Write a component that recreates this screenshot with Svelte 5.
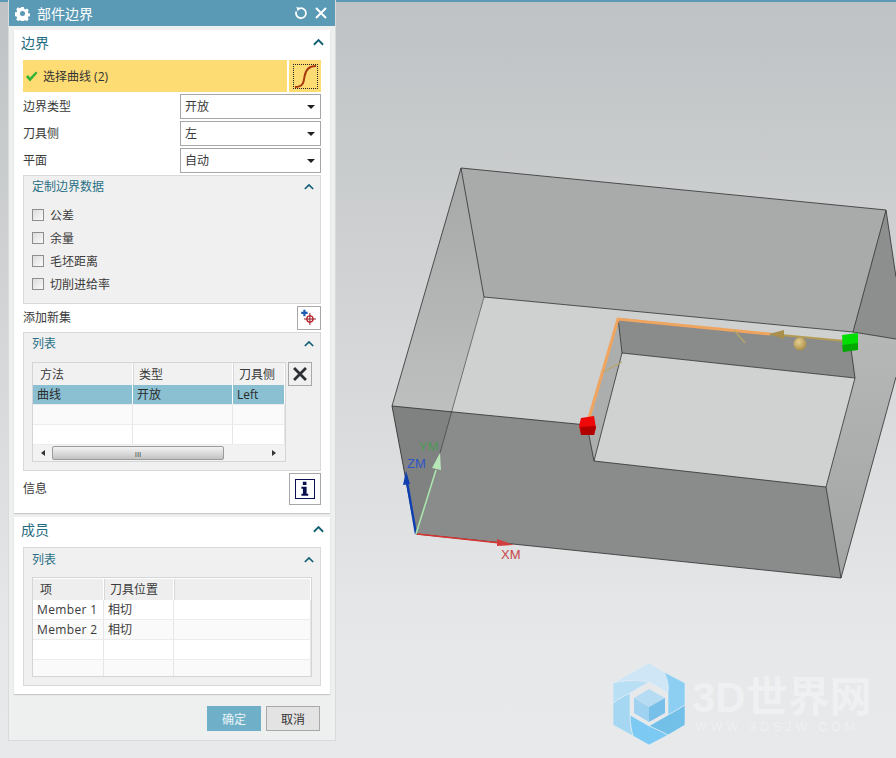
<script>
  const dropdowns = [
    { label: "边界类型", value: "开放" },
    { label: "刀具侧", value: "左" },
    { label: "平面", value: "自动" },
  ];
  const checks = ["公差", "余量", "毛坯距离", "切削进给率"];
  const members = [
    ["Member 1", "相切", ""],
    ["Member 2", "相切", ""],
    ["", "", ""],
    ["", "", ""],
  ];
</script>

{#snippet chevron(cls)}
  <svg class={cls} viewBox="0 0 12 8" aria-hidden="true">
    <path d="M1 7 L6 2 L11 7" fill="none" stroke="currentColor" stroke-width="2" />
  </svg>
{/snippet}

<div class="screen">
  <svg class="viewport" viewBox="0 0 896 758" aria-hidden="true">
    <defs>
      <linearGradient id="side" x1="0" y1="0" x2="0" y2="1">
        <stop offset="0" stop-color="#a6a8a8" />
        <stop offset="1" stop-color="#bec0c0" />
      </linearGradient>
      <linearGradient id="rightface" x1="0" y1="0" x2="0" y2="1">
        <stop offset="0" stop-color="#b6b8b8" />
        <stop offset="1" stop-color="#a2a4a4" />
      </linearGradient>
      <radialGradient id="ball" cx="0.4" cy="0.35" r="0.7">
        <stop offset="0" stop-color="#e6cf90" />
        <stop offset="1" stop-color="#a58a45" />
      </radialGradient>
    </defs>

    <!-- box faces -->
    <polygon points="461,168 886,210 853,332 484,297" fill="#a9abab" />
    <polygon points="886,210 896,277 896,339 853,332" fill="#8d8e8e" />
    <polygon points="461,168 484,297 452,412 392,406" fill="url(#side)" />
    <polygon points="484,297 853,332 850,342 618,318 587,425 452,412" fill="#cfd1d1" />
    <polygon points="853,332 896,339 896,377 841,578 826,487 855,378 850,342" fill="url(#rightface)" />
    <polygon points="618,318 850,342 855,378 622,353" fill="#8a8b8b" />
    <polygon points="618,318 622,353 594,461 587,425" fill="#acaeae" />
    <polygon points="622,353 855,378 826,487 594,461" fill="#d0d2d2" />
    <polygon points="392,406 587,425 594,461 826,487 841,578 416,534" fill="#8a8b8b" />
    <polygon points="392,406 452,412 416,534" fill="#808282" />

    <g fill="none" stroke="#2c2f2f" stroke-width="0.8">
      <path d="M461 168 L886 210 L853 332 L484 297 Z" />
      <path d="M886 210 L896 277" />
      <path d="M853 332 L896 339" />
      <path d="M461 168 L392 406 L416 534 L841 578 L896 377" />
      <path d="M484 297 L440 453" stroke-opacity="0.7" />
      <path d="M392 406 L587 425 L594 461 L826 487 L841 578" />
      <path d="M622 353 L855 378 L850 342 M855 378 L826 487 M622 353 L594 461 M618 318 L622 353" />
    </g>

    <!-- boundary curve -->
    <path d="M587 425 L618 319 L770 334" fill="none" stroke="#efa55f" stroke-width="3" />
    <path d="M770 334 L845 341" fill="none" stroke="#b59c55" stroke-width="2" />
    <path d="M769 334 L784 330 L784 339 Z" fill="#a8904c" />
    <path d="M734 330 L745 343 M603 372 L622 362" fill="none" stroke="#b9a766" stroke-width="1.2" />
    <circle cx="800" cy="344" r="6.5" fill="url(#ball)" />

    <polygon points="842,335 858,333 858,347 843,352" fill="#00dd00" />
    <polygon points="842,345 858,343 858,350 843,352" fill="#00a800" />
    <polygon points="581,418 594,416 596,428 594,435 581,434 579,426" fill="#ee0808" />
    <polygon points="580,427 596,426 594,435 581,435" fill="#b00000" />

    <!-- axes -->
    <path d="M416 534 L407 482" stroke="#0f3fb0" stroke-width="2.4" fill="none" />
    <path d="M406 471 L410 484 L403 485 Z" fill="#0f3fb0" />
    <path d="M416 534 L436 470" stroke="#a9e6ac" stroke-width="1.6" fill="none" />
    <path d="M440 453 L441 470 L432 468 Z" fill="#b7e6b7" />
    <path d="M417 534 L500 543" stroke="#d8342f" stroke-width="1.6" fill="none" />
    <path d="M514 545 L497 539 L497 546 Z" fill="#d23c3c" />
    <text class="axis" x="407" y="468" fill="#2f55c8">ZM</text>
    <text class="axis" x="419" y="451" fill="#4d9a55">YM</text>
    <text class="axis" x="501" y="559" fill="#c9464a">XM</text>

    <!-- watermark: six blades round a ring and a cube -->
    <g stroke="#e5eef4" stroke-width="0.6">
      <path d="M613 683 L649 663 L664 672 C668 680 669 686 668 693 L649 682 C638 680 625 680 613 683 Z" fill="#cfe6f6" />
      <path d="M664 672 L685 683 L685 705 C680 708 674 712 668 715 L668 693 C669 686 668 680 664 672 Z" fill="#8dcff2" />
      <path d="M685 705 L685 725 L668 735 C662 732 656 729 649 726 L668 715 C674 712 680 708 685 705 Z" fill="#72bfe8" />
      <path d="M649 745 L668 735 C662 732 656 729 649 726 L630 715 C630 722 631 730 633 736 Z" fill="#7ccaf3" />
      <path d="M613 725 L633 736 C631 730 630 722 630 715 L630 693 C624 696 618 699 613 703 Z" fill="#a6d7f2" />
      <path d="M613 683 L613 703 C618 699 624 696 630 693 L649 682 C638 680 625 680 613 683 Z" fill="#b9dff5" />
    </g>
    <polygon points="634,698 649,689 665,698 649,707" fill="#b5dcf3" />
    <polygon points="634,698 649,707 649,722 634,713" fill="#9fd2f1" />
    <polygon points="649,707 665,698 665,713 649,722" fill="#78c0e9" />
    <text class="wm-big" x="692" y="712">3D世界网</text>
    <text class="wm-small" x="695" y="731">WWW.3DSJW.COM</text>
  </svg>

  <div class="topline"></div>

  <div class="panel">
    <div class="titlebar">
      <svg class="gear" viewBox="0 0 16 16" aria-hidden="true">
        <path fill-rule="evenodd" fill="#fff" d="M6.6 1h2.8l.4 2 1.2.6 1.8-1 1.9 2-1 1.8.5 1.2 2 .4v2.8l-2 .4-.5 1.2 1 1.8-1.9 1.9-1.8-1-1.2.5-.4 2H6.6l-.4-2-1.2-.5-1.8 1-1.9-1.9 1-1.8-.5-1.2-2-.4V6.8l2-.4.5-1.2-1-1.8 1.9-2 1.8 1 1.2-.6zM8 5.4a2.7 2.7 0 1 0 0 5.4 2.7 2.7 0 0 0 0-5.4z" />
      </svg>
      <span class="title">部件边界</span>
      <svg class="reset" viewBox="0 0 14 14" aria-hidden="true">
        <path d="M5 2.6 A5 5 0 1 1 2.3 5.4" fill="none" stroke="#fff" stroke-width="1.7" />
        <path d="M2.4 0.8 L6.4 2.2 L3.6 5.2 Z" fill="#fff" />
      </svg>
      <svg class="close" viewBox="0 0 12 12" aria-hidden="true">
        <path d="M1 1 L11 11 M11 1 L1 11" stroke="#fff" stroke-width="2" />
      </svg>
    </div>

    <section class="block first">
      <div class="block-head">
        <span>边界</span>
        {@render chevron("chev")}
      </div>

      <div class="select-row">
        <div class="select-main">
          <svg class="tick" viewBox="0 0 13 11" aria-hidden="true">
            <path d="M1 6 L3 4 L5 6.5 L11 0.5 L12.5 2 L5 10.5 Z" fill="#33b233" />
          </svg>
          <span>选择曲线 (2)</span>
        </div>
        <div class="select-btn">
          <div class="dots">
            <svg viewBox="0 0 24 24" aria-hidden="true">
              <path d="M1 23 C9 23 10 19 11 12 C12 5 15 1 23 1" fill="none" stroke="#a83a10" stroke-width="2" />
            </svg>
          </div>
        </div>
      </div>

      {#each dropdowns as d}
        <div class="field">
          <span class="field-label">{d.label}</span>
          <div class="dropdown">
            <span>{d.value}</span>
            <i class="caret"></i>
          </div>
        </div>
      {/each}

      <div class="group custom">
        <div class="group-head">
          <span>定制边界数据</span>
          {@render chevron("chev small")}
        </div>
        <div class="checks">
          {#each checks as c}
            <label class="check"><i class="box"></i>{c}</label>
          {/each}
        </div>
      </div>

      <div class="action-row add">
        <span>添加新集</span>
        <div class="icon-btn small">
          <svg viewBox="0 0 24 24" aria-hidden="true">
            <path d="M7 3 V10 M3.5 6.5 H10.5" stroke="#1d5bb5" stroke-width="2.4" />
            <circle cx="13" cy="13" r="3.4" fill="none" stroke="#c8202a" stroke-width="1.4" />
            <path d="M13 6.5 V19.5 M6.5 13 H19.5" stroke="#8c1c28" stroke-width="1.1" />
          </svg>
        </div>
      </div>

      <div class="group list">
        <div class="group-head">
          <span>列表</span>
          {@render chevron("chev small")}
        </div>
        <div class="list-body">
          <div class="table t1">
            <div class="tr head">
              <div class="td">方法</div>
              <div class="td">类型</div>
              <div class="td">刀具侧</div>
            </div>
            <div class="tr selected">
              <div class="td">曲线</div>
              <div class="td">开放</div>
              <div class="td">Left</div>
            </div>
            <div class="tr alt"><div class="td"></div><div class="td"></div><div class="td"></div></div>
            <div class="tr"><div class="td"></div><div class="td"></div><div class="td"></div></div>
            <div class="scrollbar">
              <i class="arrow left"></i>
              <div class="thumb"><span>III</span></div>
              <i class="arrow right"></i>
            </div>
          </div>
          <div class="icon-btn small del">
            <svg viewBox="0 0 24 24" aria-hidden="true">
              <path d="M5.5 5.5 L18.5 18.5 M18.5 5.5 L5.5 18.5" stroke="#2b2f33" stroke-width="3" />
            </svg>
          </div>
        </div>
      </div>

      <div class="action-row info">
        <span>信息</span>
        <div class="icon-btn big">
          <div class="info-mark">
            <svg viewBox="0 0 20 20" aria-hidden="true">
              <path d="M7.6 2 H11.6 V5.6 H7.6 Z M6 7.5 H11.8 V15.4 H13.6 V17.6 H6 V15.4 H7.7 V9.7 H6 Z" fill="#0b1150" />
            </svg>
          </div>
        </div>
      </div>
    </section>

    <section class="block second">
      <div class="block-head">
        <span>成员</span>
        {@render chevron("chev")}
      </div>
      <div class="group members">
        <div class="group-head">
          <span>列表</span>
          {@render chevron("chev small")}
        </div>
        <div class="table t2">
          <div class="tr head">
            <div class="td">项</div>
            <div class="td">刀具位置</div>
            <div class="td"></div>
          </div>
          {#each members as m, i}
            <div class="tr" class:alt={i % 2 === 1}>
              <div class="td">{m[0]}</div>
              <div class="td">{m[1]}</div>
              <div class="td">{m[2]}</div>
            </div>
          {/each}
        </div>
      </div>
    </section>

    <div class="footer">
      <button class="primary">确定</button>
      <button class="cancel">取消</button>
    </div>
  </div>
</div>

<style>
  :global(body) {
    margin: 0;
  }

  .screen {
    position: relative;
    width: 896px;
    height: 758px;
    overflow: hidden;
    box-sizing: border-box;
    padding-left: 8px;
    background: linear-gradient(#bfc2c4 0, #d4d6d7 45%, #e7e8e9 85%, #e8e9ea 100%);
    font-family: "Open Sans", "Noto Sans CJK SC", sans-serif;
    font-size: 12px;
    color: #3a3a3a;
  }

  .viewport {
    position: absolute;
    left: 0;
    top: 0;
    width: 896px;
    height: 758px;
  }

  .topline {
    position: absolute;
    left: 0;
    top: 0;
    width: 100%;
    height: 2px;
    background: #5a9ab5;
  }

  .axis {
    font-family: "Liberation Sans", sans-serif;
    font-size: 13px;
  }

  .wm-big {
    font-family: "Liberation Sans", "Noto Sans CJK SC", sans-serif;
    font-weight: 700;
    font-size: 42px;
    fill: #eff0f1;
  }

  .wm-small {
    font-family: "Liberation Sans", sans-serif;
    font-size: 12.5px;
    letter-spacing: 4px;
    fill: #eff0f1;
  }

  .panel {
    position: relative;
    width: 328px;
    height: 741px;
    box-sizing: border-box;
    background: #eeefef;
    border: 1px solid #d9dadb;
    border-top: 0;
    display: flex;
    flex-direction: column;
  }

  .titlebar {
    height: 26px;
    flex: none;
    background: #5a9ab5;
    color: #fff;
    display: flex;
    align-items: center;
    padding: 0 8px 0 6px;
    font-size: 14px;
  }

  .gear {
    width: 15px;
    height: 15px;
  }

  .title {
    margin-left: 7px;
    flex: 1;
  }

  .reset {
    width: 14px;
    height: 14px;
    margin-right: 7px;
  }

  .close {
    width: 12px;
    height: 12px;
  }

  .block {
    margin: 4px 5px 0;
    background: #fff;
    padding: 0 9px;
    box-shadow: 0 1px 1px #c8c9ca;
  }

  .first {
    height: 483px;
  }

  .second {
    height: 177px;
  }

  .block-head {
    height: 24px;
    padding-bottom: 6px;
    display: flex;
    align-items: center;
    justify-content: space-between;
    margin-left: -2px;
    margin-right: -3px;
    font-size: 14px;
    color: #1f6c80;
  }

  .chev {
    width: 11px;
    height: 8px;
    color: #0f5e74;
  }

  .chev.small {
    width: 10px;
    height: 7px;
  }

  .select-row {
    display: flex;
    height: 32px;
    gap: 2px;
  }

  .select-main {
    width: 264px;
    background: #fedc74;
    display: flex;
    align-items: center;
    padding-left: 2px;
    box-sizing: border-box;
    color: #333;
  }

  .tick {
    width: 13px;
    height: 11px;
    margin-right: 5px;
  }

  .select-btn {
    width: 32px;
    background: #fedc74;
    display: flex;
    align-items: center;
    justify-content: center;
  }

  .dots {
    width: 25px;
    height: 25px;
    box-sizing: border-box;
    border: 1px dotted #222;
  }

  .dots svg {
    display: block;
    width: 23px;
    height: 23px;
  }

  .field {
    display: flex;
    justify-content: space-between;
    align-items: center;
    height: 25px;
    margin-top: 2px;
  }

  .field-label {
    margin-bottom: 2px;
  }

  .dropdown {
    width: 141px;
    height: 25px;
    box-sizing: border-box;
    border: 1px solid #a6a6a6;
    background: #fff;
    display: flex;
    align-items: center;
    justify-content: space-between;
    padding: 0 5px 2px 4px;
  }

  .caret {
    width: 0;
    height: 0;
    margin-top: 2px;
    border-left: 4px solid transparent;
    border-right: 4px solid transparent;
    border-top: 4px solid #222;
  }

  .group {
    box-sizing: border-box;
    background: #f0f0f0;
    border: 1px solid #d8d9da;
    margin-top: 2px;
  }

  .group-head {
    height: 22px;
    display: flex;
    align-items: center;
    justify-content: space-between;
    padding: 0 6px 0 8px;
    color: #2a7186;
  }

  .custom .group-head,
  .list .group-head {
    height: 20px;
    margin-bottom: 2px;
  }

  .custom {
    height: 129px;
  }

  .checks {
    margin-top: 7px;
  }

  .check {
    display: flex;
    align-items: center;
    height: 23px;
    padding-left: 8px;
  }

  .box {
    width: 12px;
    height: 12px;
    box-sizing: border-box;
    border: 1px solid #8e8e8e;
    background: linear-gradient(135deg, #dcdcdc, #fafafa);
    margin-right: 6px;
  }

  .action-row {
    display: flex;
    align-items: center;
    justify-content: space-between;
    margin-top: 2px;
  }

  .action-row > span {
    margin-bottom: 2px;
  }

  .add {
    height: 24px;
  }

  .info {
    height: 32px;
  }

  .icon-btn {
    box-sizing: border-box;
    border: 1px solid #a8a8a8;
    background: #fff;
    display: flex;
    align-items: center;
    justify-content: center;
  }

  .icon-btn.small {
    width: 24px;
    height: 24px;
  }

  .icon-btn.small svg {
    width: 22px;
    height: 22px;
  }

  .icon-btn.big {
    width: 32px;
    height: 32px;
  }

  .del {
    background: #f0f0f0;
  }

  .info-mark {
    width: 20px;
    height: 20px;
    box-sizing: border-box;
    border: 1px solid #0b1150;
    background: #fff;
  }

  .info-mark svg {
    display: block;
    width: 18px;
    height: 18px;
  }

  .list {
    height: 139px;
  }

  .list-body {
    display: flex;
    align-items: flex-start;
    gap: 2px;
    padding: 7px 0 0 8px;
  }

  .table {
    box-sizing: border-box;
    border: 1px solid #d4d5d6;
    background: #fff;
    color: #3a3a3a;
  }

  .t1 {
    width: 254px;
    height: 100px;
  }

  .t2 {
    width: 280px;
    height: 100px;
    margin: 7px 0 0 8px;
    padding-top: 1px;
    overflow: hidden;
  }

  .tr {
    display: grid;
    border-bottom: 1px solid #ececec;
    background: #fff;
  }

  .t1 .tr {
    grid-template-columns: 100px 100px 52px;
    height: 19px;
  }

  .t2 .tr {
    grid-template-columns: 71px 70px 137px;
    height: 19px;
  }

  .td {
    border-right: 1px solid #e6e6e6;
    padding-left: 4px;
    line-height: 19px;
    white-space: nowrap;
    overflow: hidden;
  }

  .t2 .td:first-child {
    letter-spacing: 0.35px;
  }

  .t1 .tr.head {
    height: 22px;
  }

  .t2 .tr.head {
    height: 21px;
    background: #eeeeee;
  }

  .tr.head {
    background: #f1f1f1;
    border-bottom: 0;
  }

  .tr.head .td {
    padding-left: 6px;
    line-height: 21px;
    border-right: 1px solid #fff;
    box-shadow: 1px 0 0 #d8d8d8 inset;
  }

  .tr.head .td:first-child {
    box-shadow: none;
    padding-left: 7px;
  }

  .t1 .tr.head .td {
    line-height: 24px;
  }

  .tr.selected {
    background: #8ac0d2;
    color: #2a2a2a;
  }

  .tr.selected .td {
    border-right: 1px solid #fff;
  }

  .tr.alt {
    background: #fafafa;
  }

  .scrollbar {
    height: 16px;
    background: #f2f2f2;
    display: flex;
    align-items: center;
    padding: 0 8px;
  }

  .arrow {
    width: 0;
    height: 0;
    border-top: 3.5px solid transparent;
    border-bottom: 3.5px solid transparent;
  }

  .arrow.left {
    border-right: 4px solid #333;
  }

  .arrow.right {
    border-left: 4px solid #333;
    margin-left: 48px;
  }

  .thumb {
    width: 172px;
    height: 14px;
    margin-left: 7px;
    box-sizing: border-box;
    border: 1px solid #9b9b9b;
    border-radius: 2px;
    background: linear-gradient(#f2f2f2, #dcdcdc 50%, #c2c2c2);
    display: flex;
    align-items: center;
    justify-content: center;
    font-size: 8px;
    color: #444;
  }

  .members {
    height: 139px;
    margin-top: 0;
  }

  .footer {
    display: flex;
    justify-content: flex-end;
    gap: 5px;
    padding: 12px 15px 0 0;
  }

  button {
    width: 54px;
    height: 25px;
    font: inherit;
    padding: 0;
  }

  .primary {
    border: 0;
    background: #6fb0c8;
    color: #e9f4f7;
  }

  .cancel {
    border: 1px solid #a8a8a8;
    background: #e3e3e3;
    color: #333;
  }
</style>
